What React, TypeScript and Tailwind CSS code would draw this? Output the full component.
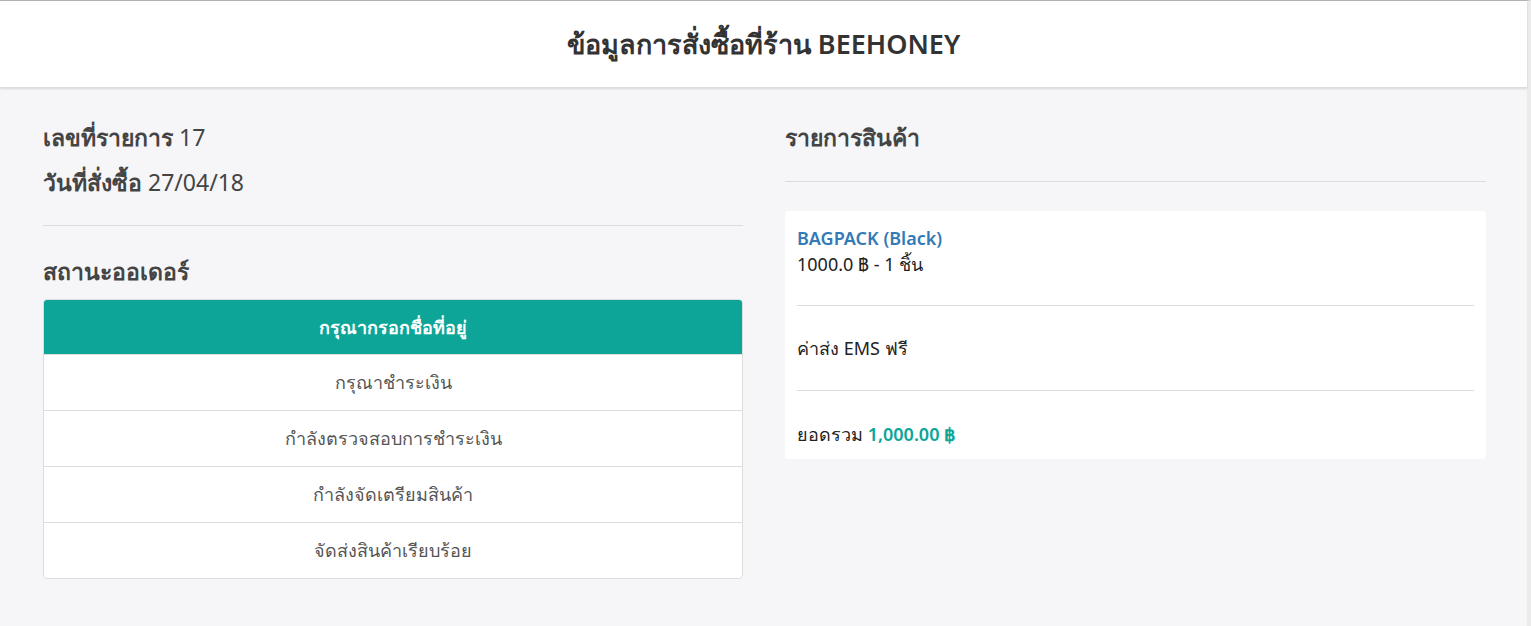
import React from 'react';

const statuses = [
  'กรุณากรอกชื่อที่อยู่',
  'กรุณาชำระเงิน',
  'กำลังตรวจสอบการชำระเงิน',
  'กำลังจัดเตรียมสินค้า',
  'จัดส่งสินค้าเรียบร้อย',
];

const App: React.FC = () => {
  const active = 0;

  return (
    <div className="min-h-[626px] bg-[#f6f6f8] text-[#333] border-t border-[#b4b4b4] border-r-4 border-r-[#ebebeb] font-['Noto_Sans',sans-serif]">
      <header className="h-[87px] bg-white flex items-center justify-center shadow-[0_1px_2px_rgba(0,0,0,0.12)] border-b border-[#dddddd]">
        <h1 className="text-[27px] font-semibold text-[#333]">ข้อมูลการสั่งซื้อที่ร้าน BEEHONEY</h1>
      </header>

      <div className="flex gap-[42px] pl-[43px] pt-[27px]">
        {/* order info */}
        <div className="w-[700px]">
          <div className="text-[23px] leading-[45px] text-[#444]">
            <p><span className="font-semibold">เลขที่รายการ</span> 17</p>
            <p><span className="font-semibold">วันที่สั่งซื้อ</span> 27/04/18</p>
          </div>
          <hr className="mt-[20px] border-[#dcdcdc]" />
          <h2 className="mt-[27px] text-[23px] font-semibold text-[#444] leading-[36px]">สถานะออเดอร์</h2>
          <ul className="mt-[10px] rounded-[4px] border border-[#dddddd] bg-white overflow-hidden">
            {statuses.map((s, i) => (
              <li
                key={s}
                className={
                  i === active
                    ? 'h-[54px] flex items-center justify-center bg-[#0ca597] text-white text-[18px] font-semibold'
                    : 'h-[56px] flex items-center justify-center border-t border-[#dddddd] text-[#555] text-[18px]'
                }
              >
                {s}
              </li>
            ))}
          </ul>
        </div>

        {/* items */}
        <div className="w-[701px]">
          <h2 className="text-[23px] font-semibold text-[#444] leading-[45px]">รายการสินค้า</h2>
          <hr className="mt-[21px] border-[#dcdcdc]" />
          <div className="mt-[29px] bg-white rounded-[4px] px-[12px] pt-[14px] pb-[12px]">
            <p className="text-[18px] font-semibold text-[#337ab7] leading-[26px]">BAGPACK (Black)</p>
            <p className="text-[18px] text-[#222] leading-[26px]">1000.0 ฿ - 1 ชิ้น</p>
            <hr className="mt-[28px] border-[#dcdcdc]" />
            <p className="py-[30px] text-[18px] text-[#222] leading-[24px]">ค่าส่ง EMS ฟรี</p>
            <hr className="border-[#dcdcdc]" />
            <p className="pt-[30px] text-[18px] text-[#222] leading-[26px]">
              ยอดรวม <span className="font-semibold text-[#0ca597]">1,000.00 ฿</span>
            </p>
          </div>
        </div>
      </div>
    </div>
  );
};

export default App;
